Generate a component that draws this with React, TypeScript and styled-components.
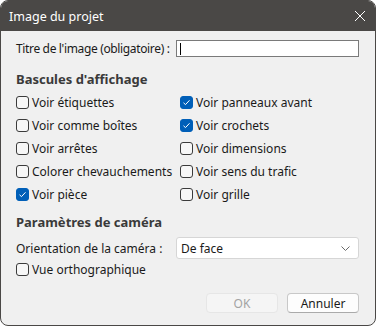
import styled, { createGlobalStyle } from "styled-components";

const GlobalStyle = createGlobalStyle`
  html, body {
    margin: 0;
    padding: 0;
    background: #ffffff;
  }
  * {
    box-sizing: border-box;
  }
`;

const Window = styled.div`
  width: 376px;
  height: 326px;
  display: flex;
  flex-direction: column;
  border: 1px solid #4a4846;
  border-radius: 8px;
  overflow: hidden;
  background: #f0f0f0;
  font-family: "Noto Sans", "Open Sans", sans-serif;
  font-size: 12px;
  color: #1a1a1a;
  white-space: nowrap;
`;

const TitleBar = styled.div`
  height: 30px;
  flex: none;
  display: flex;
  align-items: center;
  justify-content: space-between;
  padding: 0 8px 0 8px;
  background: #4a4846;
  color: #ffffff;
  font-size: 12.5px;
`;

const CloseButton = styled.div`
  width: 14px;
  height: 14px;
  display: flex;
  align-items: center;
  justify-content: center;
`;

const Body = styled.div`
  flex: 1;
  display: flex;
  flex-direction: column;
  padding: 7px 16px 0 15px;
`;

const FieldRow = styled.div<{ $height: number; $top?: number }>`
  display: grid;
  grid-template-columns: 160px 1fr;
  align-items: center;
  height: ${(p) => p.$height}px;
  margin-top: ${(p) => p.$top ?? 0}px;
`;

const FieldLabel = styled.span<{ $tight?: boolean }>`
  letter-spacing: ${(p) => (p.$tight ? "-0.35px" : "0")};
`;

const TextInput = styled.div`
  height: 17px;
  border: 1px solid #7a7a7a;
  background: #ffffff;
  padding-left: 3px;
  display: flex;
  align-items: center;
`;

const Caret = styled.span`
  width: 1px;
  height: 12px;
  background: #000;
`;

const SectionTitle = styled.div<{ $top: number }>`
  height: 24px;
  margin-top: ${(p) => p.$top}px;
  display: flex;
  align-items: center;
  font-weight: 700;
  font-size: 13px;
  color: #3a3a3a;
`;

const CheckGrid = styled.div`
  display: grid;
  grid-template-columns: 164px 1fr;
  grid-auto-rows: 23px;
`;

const CheckRow = styled.label<{ $height?: number }>`
  display: flex;
  align-items: center;
  gap: 3px;
  ${(p) => (p.$height ? `height: ${p.$height}px;` : "")}
`;

const Box = styled.span<{ $checked: boolean }>`
  width: 13px;
  height: 13px;
  flex: none;
  border-radius: 3px;
  border: 1px solid ${(p) => (p.$checked ? "#005fb8" : "#3b3b3b")};
  background: ${(p) => (p.$checked ? "#005fb8" : "#f7f7f7")};
  display: flex;
  align-items: center;
  justify-content: center;
`;

const Select = styled.div`
  height: 22px;
  border: 1px solid #d6d6d6;
  border-radius: 3px;
  background: #ffffff;
  display: flex;
  align-items: center;
  justify-content: space-between;
  padding: 0 8px 0 4px;
`;

const ButtonBar = styled.div`
  margin-top: 13px;
  display: flex;
  justify-content: flex-end;
  gap: 9px;
`;

const Button = styled.div<{ $disabled?: boolean }>`
  width: 72px;
  height: 20px;
  border-radius: 4px;
  display: flex;
  align-items: center;
  justify-content: center;
  border: 1px solid ${(p) => (p.$disabled ? "#e6e6e6" : "#c8c8c8")};
  border-bottom-color: ${(p) => (p.$disabled ? "#e6e6e6" : "#aaaaaa")};
  background: ${(p) => (p.$disabled ? "#f5f5f5" : "#fdfdfd")};
  color: ${(p) => (p.$disabled ? "#a3a3a3" : "#1a1a1a")};
`;

const Check = ({ checked, label, height }: { checked: boolean; label: string; height?: number }) => (
  <CheckRow $height={height}>
    <Box $checked={checked}>
      {checked && (
        <svg width="9" height="9" viewBox="0 0 9 9">
          <path d="M1.5 4.8 L3.5 6.6 L7.5 2.3" fill="none" stroke="#ffffff" strokeWidth="1" />
        </svg>
      )}
    </Box>
    <span>{label}</span>
  </CheckRow>
);

const toggles: [string, boolean][] = [
  ["Voir étiquettes", false],
  ["Voir panneaux avant", true],
  ["Voir comme boîtes", false],
  ["Voir crochets", true],
  ["Voir arrêtes", false],
  ["Voir dimensions", false],
  ["Colorer chevauchements", false],
  ["Voir sens du trafic", false],
  ["Voir pièce", true],
  ["Voir grille", false],
];

export default function App() {
  return (
    <>
      <GlobalStyle />
      <Window>
        <TitleBar>
          <span>Image du projet</span>
          <CloseButton>
            <svg width="12" height="12" viewBox="0 0 12 12">
              <path d="M1 1 L11 11 M11 1 L1 11" stroke="#ffffff" strokeWidth="1" />
            </svg>
          </CloseButton>
        </TitleBar>
        <Body>
          <FieldRow $height={21}>
            <FieldLabel $tight>Titre de l'image (obligatoire) :</FieldLabel>
            <TextInput>
              <Caret />
            </TextInput>
          </FieldRow>
          <SectionTitle $top={8}>Bascules d'affichage</SectionTitle>
          <CheckGrid>
            {toggles.map(([label, checked]) => (
              <Check key={label} label={label} checked={checked} />
            ))}
          </CheckGrid>
          <SectionTitle $top={4}>Paramètres de caméra</SectionTitle>
          <FieldRow $height={22} $top={3}>
            <FieldLabel>Orientation de la caméra :</FieldLabel>
            <Select>
              <span>De face</span>
              <svg width="9" height="5" viewBox="0 0 9 5">
                <path d="M0.5 0.5 L4.5 4.5 L8.5 0.5" fill="none" stroke="#6a6a6a" strokeWidth="1" />
              </svg>
            </Select>
          </FieldRow>
          <Check label="Vue orthographique" checked={false} height={21} />
          <ButtonBar>
            <Button $disabled>OK</Button>
            <Button>Annuler</Button>
          </ButtonBar>
        </Body>
      </Window>
    </>
  );
}
